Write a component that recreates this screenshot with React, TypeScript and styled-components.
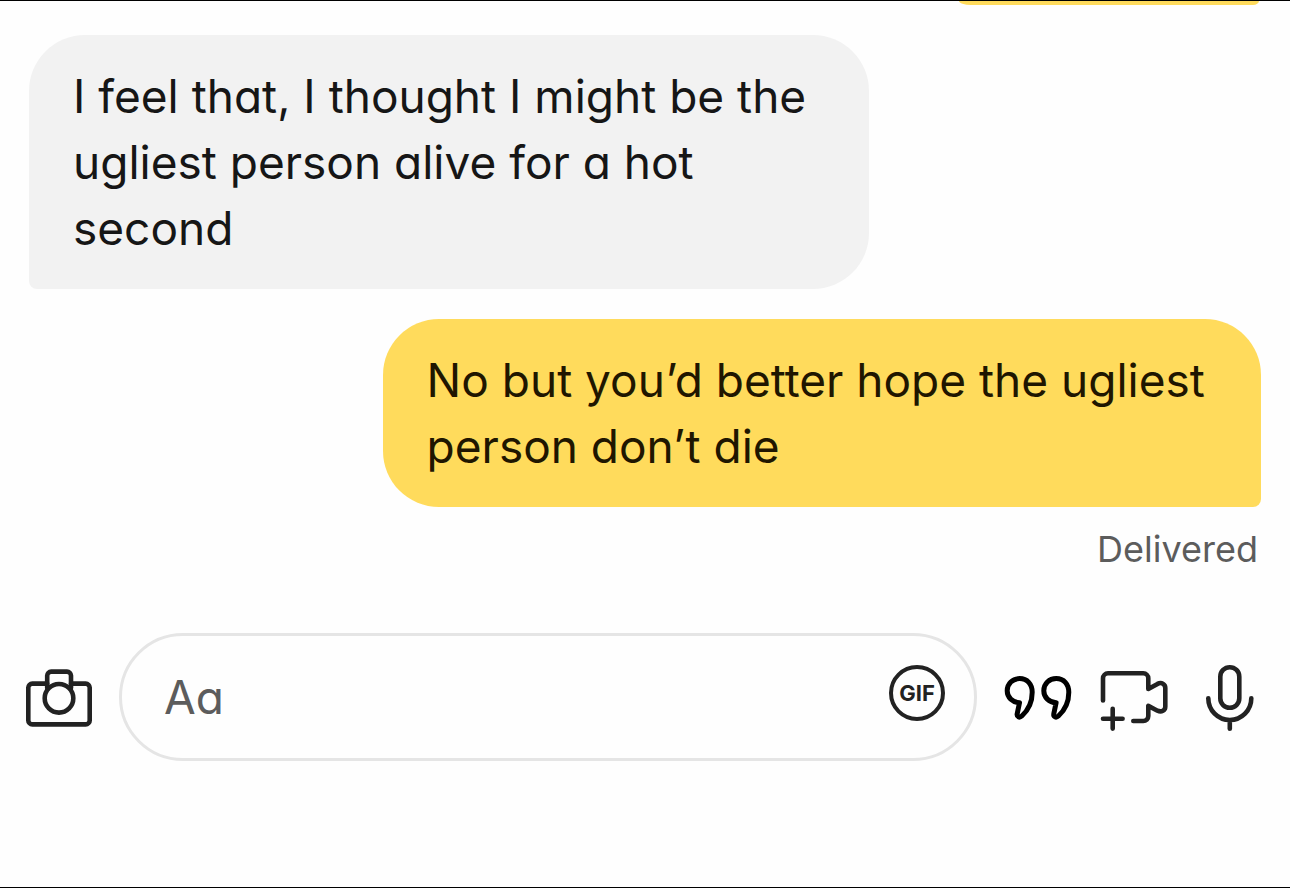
import React from "react";
import styled, { createGlobalStyle } from "styled-components";

const GlobalStyle = createGlobalStyle`
  *, *::before, *::after { box-sizing: border-box; }
  body {
    margin: 0;
    background: #fefefe;
    font-family: Inter, "Liberation Sans", sans-serif;
    font-feature-settings: "cv11";
    color: #161616;
  }
`;

const Screen = styled.main`
  display: flex;
  flex-direction: column;
  min-height: 100vh;
  border-top: 1px solid #000;
  border-bottom: 1px solid #000;
`;

const Thread = styled.section`
  display: flex;
  flex-direction: column;
  gap: 30px;
  padding: 0 29px;
`;

const EarlierBubble = styled.div`
  align-self: flex-end;
  width: 300px;
  height: 4px;
  margin-right: 2px;
  border-radius: 0 0 6px 12px / 0 0 4px 4px;
  background: #ffdb5c;
`;

const Bubble = styled.p<{ $mine?: boolean }>`
  align-self: ${(p) => (p.$mine ? "flex-end" : "flex-start")};
  width: ${(p) => (p.$mine ? "71.3%" : "68.2%")};
  margin: 0;
  padding: 28px 44px;
  border-radius: ${(p) => (p.$mine ? "56px 56px 8px 56px" : "56px 56px 56px 8px")};
  background: ${(p) => (p.$mine ? "#ffdb5c" : "#f2f2f2")};
  color: ${(p) => (p.$mine ? "#1f1600" : "#161616")};
  font-size: 46px;
  line-height: 66px;
`;

const Status = styled.p`
  margin: 20px 32px 0;
  text-align: right;
  font-size: 36px;
  line-height: 44px;
  color: #5c5c5c;
`;

const Composer = styled.form`
  display: flex;
  align-items: center;
  gap: 24px;
  margin-top: 62px;
  padding: 0 25px 0 23px;
`;

const Field = styled.div`
  flex: 1;
  min-width: 0;
  display: flex;
  align-items: center;
  height: 128px;
  padding: 0 29px 0 42px;
  border: 3px solid #e5e5e5;
  border-radius: 64px;
`;

const TextBox = styled.input`
  flex: 1;
  min-width: 0;
  padding: 0;
  border: 0;
  outline: 0;
  background: transparent;
  font: inherit;
  font-feature-settings: inherit;
  font-size: 46px;
  line-height: 66px;
  color: #161616;
  &::placeholder { color: #5c5c5c; opacity: 1; }
`;

const GifButton = styled.button`
  width: 56px;
  height: 56px;
  margin: 0 0 8px;
  padding: 0;
  border: 4px solid #222;
  border-radius: 50%;
  background: transparent;
  color: #222;
  font-family: Inter, sans-serif;
  font-size: 22px;
  font-weight: 700;
  line-height: 48px;
`;

const IconButton = styled.button`
  flex: none;
  width: 72px;
  height: 72px;
  padding: 0;
  border: 0;
  background: transparent;
  color: #222;
`;

const Glyph = styled.svg`
  display: block;
  width: 72px;
  height: 72px;
  fill: none;
  stroke: currentColor;
  stroke-width: 4.6;
  stroke-linecap: round;
  stroke-linejoin: round;
`;

const quotePath =
  "M18.5 41.8C11.5 41.3 6.2 36.6 6.2 29.8C6.2 22.8 11.6 17.6 18.6 17.6C26.2 17.6 31.2 23 31.2 31.2C31.2 40.5 26.8 49.5 20.8 55C18.4 57.2 15.6 55.8 16.2 52.8Z";

export default function App() {
  return (
    <>
      <GlobalStyle />
      <Screen>
        <Thread>
          <EarlierBubble />
          <Bubble>I feel that, I thought I might be the ugliest person alive for a hot second</Bubble>
          <Bubble $mine>No but you’d better hope the ugliest person don’t die</Bubble>
        </Thread>
        <Status>Delivered</Status>
        <Composer onSubmit={(e) => e.preventDefault()}>
          <IconButton type="button" aria-label="Camera">
            <Glyph viewBox="0 0 72 72">
              <path d="M24.2 22.6H9.3a4 4 0 0 0-4 4V59.4a4 4 0 0 0 4 4H62.7a4 4 0 0 0 4-4V26.6a4 4 0 0 0-4-4H48" />
              <path d="M24.2 27V14.6a4 4 0 0 1 4-4H44a4 4 0 0 1 4 4V27" />
              <circle cx="36" cy="37.3" r="14.3" />
            </Glyph>
          </IconButton>
          <Field>
            <TextBox type="text" placeholder="Aa" aria-label="Message" />
            <GifButton type="button">GIF</GifButton>
          </Field>
          <IconButton type="button" aria-label="Quote">
            <Glyph viewBox="0 0 72 72">
              <path stroke="#000" strokeWidth="5" d={quotePath} />
              <path stroke="#000" strokeWidth="5" transform="translate(36.6 0)" d={quotePath} />
            </Glyph>
          </IconButton>
          <IconButton type="button" aria-label="Add video">
            <Glyph viewBox="0 0 72 72">
              <path d="M6 39.5V17.3a5 5 0 0 1 5-5H46.3a5 5 0 0 1 5 5V28L60.5 22.9C64.5 20.8 68.3 23 68.3 27V45.4C68.3 49.4 64.5 51.6 60.5 49.7L51.3 44.9V55a5 5 0 0 1-5 5H36.3" />
              <path d="M15.7 47.8V67.6M6 57.7H25.6" />
            </Glyph>
          </IconButton>
          <IconButton type="button" aria-label="Voice message">
            <Glyph viewBox="0 0 72 72">
              <rect x="27.3" y="6.2" width="19" height="40.6" rx="9.5" />
              <path d="M15.3 37.2a21.5 21.8 0 0 0 43 0M36.8 59V67.8" />
            </Glyph>
          </IconButton>
        </Composer>
      </Screen>
    </>
  );
}
